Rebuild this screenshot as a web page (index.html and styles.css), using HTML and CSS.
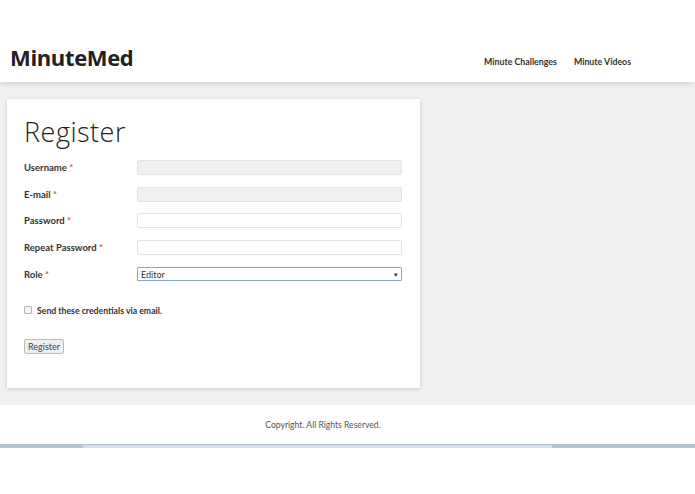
FILE: index.html
```html
<!DOCTYPE html>
<html>
<head>
  <meta charset="UTF-8" />
  <title>MinuteMed - Register</title>
  <meta name="viewport" content="width=device-width, initial-scale=1" />
  <link rel="stylesheet" href="styles.css">
</head>
<body>
  <header class="site-header">
    <div class="logo">MinuteMed</div>
    <nav class="nav">
      <a href="#">Minute Challenges</a>
      <a href="#">Minute Videos</a>
    </nav>
  </header>

  <main class="content">
    <div class="card">
      <h1>Register</h1>
      <form class="form">
        <div class="row">
          <label for="username">Username <span class="req">*</span></label>
          <input type="text" id="username" class="field field-grey" readonly>
        </div>
        <div class="row">
          <label for="email">E-mail <span class="req">*</span></label>
          <input type="text" id="email" class="field field-grey" readonly>
        </div>
        <div class="row">
          <label for="password">Password <span class="req">*</span></label>
          <input type="password" id="password" class="field">
        </div>
        <div class="row">
          <label for="password2">Repeat Password <span class="req">*</span></label>
          <input type="password" id="password2" class="field">
        </div>
        <div class="row">
          <label for="role">Role <span class="req">*</span></label>
          <div class="select">
            <span>Editor</span>
            <span class="arrow">&#9662;</span>
          </div>
        </div>

        <div class="check-row">
          <span class="checkbox"></span>
          <label>Send these credentials via email.</label>
        </div>

        <div class="button-row">
          <button type="button" class="btn">Register</button>
        </div>
      </form>
    </div>
  </main>

  <footer class="site-footer">
    <p>Copyright. All Rights Reserved.</p>
  </footer>
  <div class="scrollbar">
    <div class="seg seg-dark seg-left"></div>
    <div class="seg seg-light"></div>
    <div class="seg seg-dark seg-right"></div>
  </div>
</body>
</html>
```

FILE: styles.css
```css
html, body {
  margin: 0;
  padding: 0;
  background: #fff;
}
body {
  font-family: Lato, "Open Sans", sans-serif;
  color: #333;
}
.site-header {
  height: 82px;
  box-sizing: border-box;
  background: #fff;
  display: flex;
  align-items: flex-start;
  justify-content: space-between;
  padding: 42px 64px 0 10px;
  box-shadow: 0 2px 5px rgba(0,0,0,0.12);
  position: relative;
  z-index: 1;
}
.logo {
  font-family: "Open Sans", sans-serif;
  font-weight: 700;
  font-size: 22px;
  line-height: 30px;
  color: #222;
  letter-spacing: -0.35px;
}
.nav {
  display: flex;
  gap: 17px;
  margin-top: 14px;
}
.nav a {
  font-size: 8.8px;
  line-height: 12px;
  font-weight: 700;
  color: #333;
  text-decoration: none;
}
.content {
  background: #f2f0f0;
  padding: 17px 0 17px 7px;
}
.card {
  width: 413px;
  height: 289px;
  box-sizing: border-box;
  background: #fff;
  padding: 14px 18px 0 17px;
  box-shadow: 0 1px 4px rgba(0,0,0,0.18);
}
h1 {
  margin: 0 0 3px;
  font-family: "Open Sans", sans-serif;
  font-weight: 300;
  font-size: 27px;
  line-height: 38px;
  color: #222;
  letter-spacing: 0.5px;
}
.row {
  display: grid;
  grid-template-columns: 113px 265px;
  align-items: center;
  height: 26.75px;
}
.row label {
  font-size: 9.5px;
  font-weight: 700;
  color: #333;
}
.req {
  color: #d9534f;
}
.field {
  height: 15px;
  box-sizing: border-box;
  border: 1px solid #e3e3e3;
  border-radius: 2px;
  background: #fff;
  margin: 0;
  padding: 0 3px;
  font-size: 9px;
}
.field-grey {
  background: #f0f0f0;
}
.select {
  height: 14px;
  box-sizing: border-box;
  border: 1px solid #86a6d6;
  border-radius: 1px;
  background: #fff;
  display: flex;
  justify-content: space-between;
  align-items: center;
  padding: 0 3px 0 3px;
  font-size: 9px;
  color: #333;
}
.select .arrow {
  font-size: 7px;
  color: #333;
}
.check-row {
  display: flex;
  align-items: center;
  gap: 5px;
  margin-top: 17px;
}
.checkbox {
  width: 6px;
  height: 6px;
  border: 1px solid #b5b5b5;
  border-radius: 1px;
  background: #f4f4f4;
}
.check-row label {
  font-size: 8.7px;
  font-weight: 700;
  color: #333;
}
.button-row {
  margin-top: 18px;
}
.btn {
  font-family: Lato, sans-serif;
  font-size: 9px;
  color: #444;
  background: #efefef;
  border: 1px solid #bcbcbc;
  border-radius: 2px;
  height: 15px;
  padding: 0 3px;
  line-height: 12px;
}
.site-footer {
  background: #fff;
  height: 39px;
  display: flex;
  align-items: center;
  justify-content: center;
  padding-right: 49px;
}
.site-footer p {
  margin: 0;
  font-size: 8.6px;
  color: #555;
}
.scrollbar {
  display: flex;
  height: 3px;
  border-top: 1px solid #a9c0d8;
}
.seg {
  height: 3px;
}
.seg-dark {
  background: #b9c3cc;
}
.seg-light {
  background: #d6dde4;
  flex: 1;
}
.seg-left {
  width: 83px;
}
.seg-right {
  width: 143px;
}
```
